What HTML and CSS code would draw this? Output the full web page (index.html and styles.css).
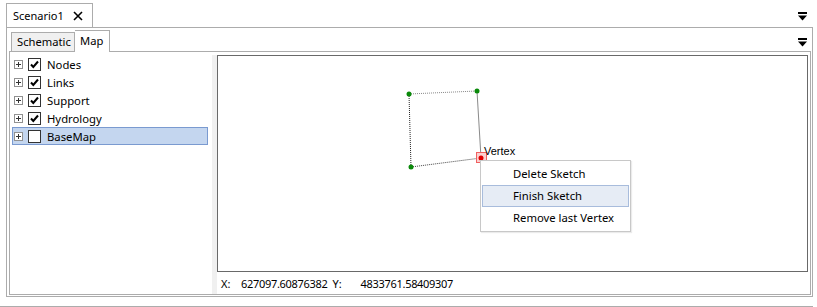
FILE: index.html
```html
<!DOCTYPE html>
<html lang="en">
<head>
    <meta charset="UTF-8">
    <title>Scenario1 - Map</title>
    <link rel="stylesheet" href="styles.css">
</head>
<body>
    <div class="doc-tabs">
        <div class="doc-tab">
            <span>Scenario1</span>
            <svg class="close" width="10" height="10" viewBox="0 0 10 10"><path d="M1 1L9 9M9 1L1 9" stroke="#000" stroke-width="1.6"/></svg>
        </div>
        <svg class="menu-arrow" width="9" height="9" viewBox="0 0 9 9"><rect x="0" y="0" width="9" height="2" fill="#000"/><path d="M0 3.5H9L4.5 8.5Z" fill="#000"/></svg>
    </div>

    <div class="doc-panel">
        <div class="view-tabs">
            <div class="view-tab">Schematic</div>
            <div class="view-tab active">Map</div>
            <svg class="menu-arrow" width="9" height="9" viewBox="0 0 9 9"><rect x="0" y="0" width="9" height="2" fill="#000"/><path d="M0 3.5H9L4.5 8.5Z" fill="#000"/></svg>
        </div>

        <div class="view-panel">
            <ul class="layers">
                <li class="layer"><span class="expander"></span><span class="check on"></span>Nodes</li>
                <li class="layer"><span class="expander"></span><span class="check on"></span>Links</li>
                <li class="layer"><span class="expander"></span><span class="check on"></span>Support</li>
                <li class="layer"><span class="expander"></span><span class="check on"></span>Hydrology</li>
                <li class="layer selected"><span class="expander"></span><span class="check"></span>BaseMap</li>
            </ul>

            <div class="map-pane">
                <div class="splitter"></div>
                <div class="map-col">
                    <div class="map-frame">
                        <svg class="sketch" width="589" height="215" viewBox="0 0 589 215">
                            <g stroke-width="1" fill="none">
                                <path d="M191 38L259 35" stroke="#888" stroke-dasharray="1 1"/>
                                <path d="M191 38L193 111" stroke="#222" stroke-dasharray="1 1"/>
                                <path d="M193 111L263 102" stroke="#444" stroke-dasharray="1 1"/>
                                <path d="M259 35L263 102" stroke="#8a8a8a"/>
                            </g>
                            <rect x="258.5" y="96.5" width="10" height="10" fill="#fbd0d0" stroke="#f06060"/>
                            <circle cx="191" cy="38" r="2.5" fill="#0a8a0a"/>
                            <circle cx="259" cy="35" r="2.5" fill="#0a8a0a"/>
                            <circle cx="193" cy="111" r="2.5" fill="#0a8a0a"/>
                            <circle cx="263" cy="102" r="2.5" fill="#e00000"/>
                            <text x="266" y="99" class="vertex-label">Vertex</text>
                        </svg>

                        <ul class="context-menu">
                            <li>Delete Sketch</li>
                            <li class="hover">Finish Sketch</li>
                            <li>Remove last Vertex</li>
                        </ul>
                    </div>
                    <div class="coords">
                        <span class="lbl-x">X:</span><span class="val">627097.60876382</span>
                        <span class="lbl-y">Y:</span><span class="val">4833761.58409307</span>
                    </div>
                </div>
            </div>
        </div>
    </div>
    <div class="bottom-rule"></div>
</body>
</html>
```

FILE: styles.css
```css
body {
    margin: 0;
    background-color: #fff;
    font-family: "Noto Sans", "Open Sans", sans-serif;
    font-size: 11px;
    color: #000;
    width: 817px;
    height: 307px;
    overflow: hidden;
}
.doc-tabs {
    height: 27px;
    display: flex;
    align-items: flex-end;
    padding-left: 6px;
    position: relative;
}
.doc-tab {
    height: 24px;
    box-sizing: border-box;
    width: 87px;
    border: 1px solid #acacac;
    border-bottom: none;
    background-color: #fff;
    display: flex;
    align-items: center;
    padding: 0 0 0 6px;
    gap: 9px;
}
.doc-tab .close {
    margin-top: 1px;
}
.menu-arrow {
    position: absolute;
    right: 10px;
}
.doc-tabs .menu-arrow {
    top: 12px;
}
.doc-panel {
    margin: 0 4px 0 6px;
    height: 270px;
    box-sizing: border-box;
    border: 1px solid #acacac;
    display: flex;
    flex-direction: column;
}
.view-tabs {
    height: 23px;
    display: flex;
    align-items: flex-end;
    padding-left: 4px;
    position: relative;
}
.view-tabs .menu-arrow {
    top: 10px;
    right: 5px;
}
.view-tab {
    height: 19px;
    width: 64px;
    box-sizing: border-box;
    border: 1px solid #acacac;
    border-bottom: none;
    background-color: #f0f0f0;
    padding-left: 5px;
    line-height: 17px;
    font-size: 11.2px;
}
.view-tab.active {
    height: 22px;
    width: 35px;
    background-color: #fff;
    border-left: none;
    margin-bottom: -1px;
    position: relative;
    z-index: 1;
    line-height: 20px;
    padding-left: 5px;
}
.view-panel {
    margin: 0 1px 1px 2px;
    flex: 1;
    border: 1px solid #acacac;
    display: flex;
}
.layers {
    list-style: none;
    margin: 0;
    padding: 3px 0 0 2px;
    width: 200px;
}
.layer {
    height: 18px;
    box-sizing: border-box;
    display: flex;
    align-items: center;
    border: 1px solid transparent;
    width: 196px;
    font-size: 11.3px;
}
.layer.selected {
    background-color: #c4d6ef;
    border-color: #7a9ad0;
}
.expander {
    width: 9px;
    height: 9px;
    box-sizing: border-box;
    border: 1px solid #919191;
    background: #fff linear-gradient(#333, #333) center / 5px 1px no-repeat;
    margin-left: 1px;
    position: relative;
}
.expander::after {
    content: "";
    position: absolute;
    left: 3px;
    top: 1px;
    width: 1px;
    height: 5px;
    background-color: #333;
}
.check {
    width: 13px;
    height: 13px;
    box-sizing: border-box;
    border: 1px solid #333;
    background-color: #fff;
    margin: 0 6px 0 5px;
}
.check.on {
    background: #fff url("data:image/svg+xml,%3Csvg xmlns='http://www.w3.org/2000/svg' width='11' height='11'%3E%3Cpath d='M2 5.5L4.3 8L9 2.5' fill='none' stroke='%23000' stroke-width='2'/%3E%3C/svg%3E") center no-repeat;
}
.map-pane {
    flex: 1;
    display: flex;
    padding-top: 3px;
}
.splitter {
    width: 5px;
    background-color: #f0f0f0;
}
.map-col {
    flex: 1;
    margin-right: 2px;
    display: flex;
    flex-direction: column;
}
.map-frame {
    height: 217px;
    box-sizing: border-box;
    border: 1px solid #696969;
    position: relative;
    background-color: #fff;
}
.sketch {
    position: absolute;
    left: 0;
    top: 0;
}
.vertex-label {
    font-family: "Liberation Sans", Arial, sans-serif;
    font-size: 11px;
    fill: #000;
}
.context-menu {
    position: absolute;
    left: 262px;
    top: 104px;
    width: 151px;
    box-sizing: border-box;
    list-style: none;
    margin: 0;
    padding: 2px 1px;
    background-color: #fff;
    border: 1px solid #c8c8c8;
    box-shadow: 1px 1px 1px rgba(0, 0, 0, 0.08);
}
.context-menu li {
    height: 22px;
    box-sizing: border-box;
    line-height: 20px;
    padding-left: 30px;
    border: 1px solid transparent;
    font-size: 11.3px;
}
.context-menu li.hover {
    background-color: #e6ecf5;
    border-color: #a8bcdc;
}
.coords {
    flex: 1;
    display: flex;
    align-items: center;
    padding-left: 4px;
}
.coords .val {
    letter-spacing: -0.3px;
}
.lbl-x {
    width: 20px;
}
.lbl-y {
    width: 28px;
    margin-left: 5px;
}
.bottom-rule {
    margin-top: 9px;
    height: 1px;
    background-color: #acacac;
    margin-right: 4px;
}
```
